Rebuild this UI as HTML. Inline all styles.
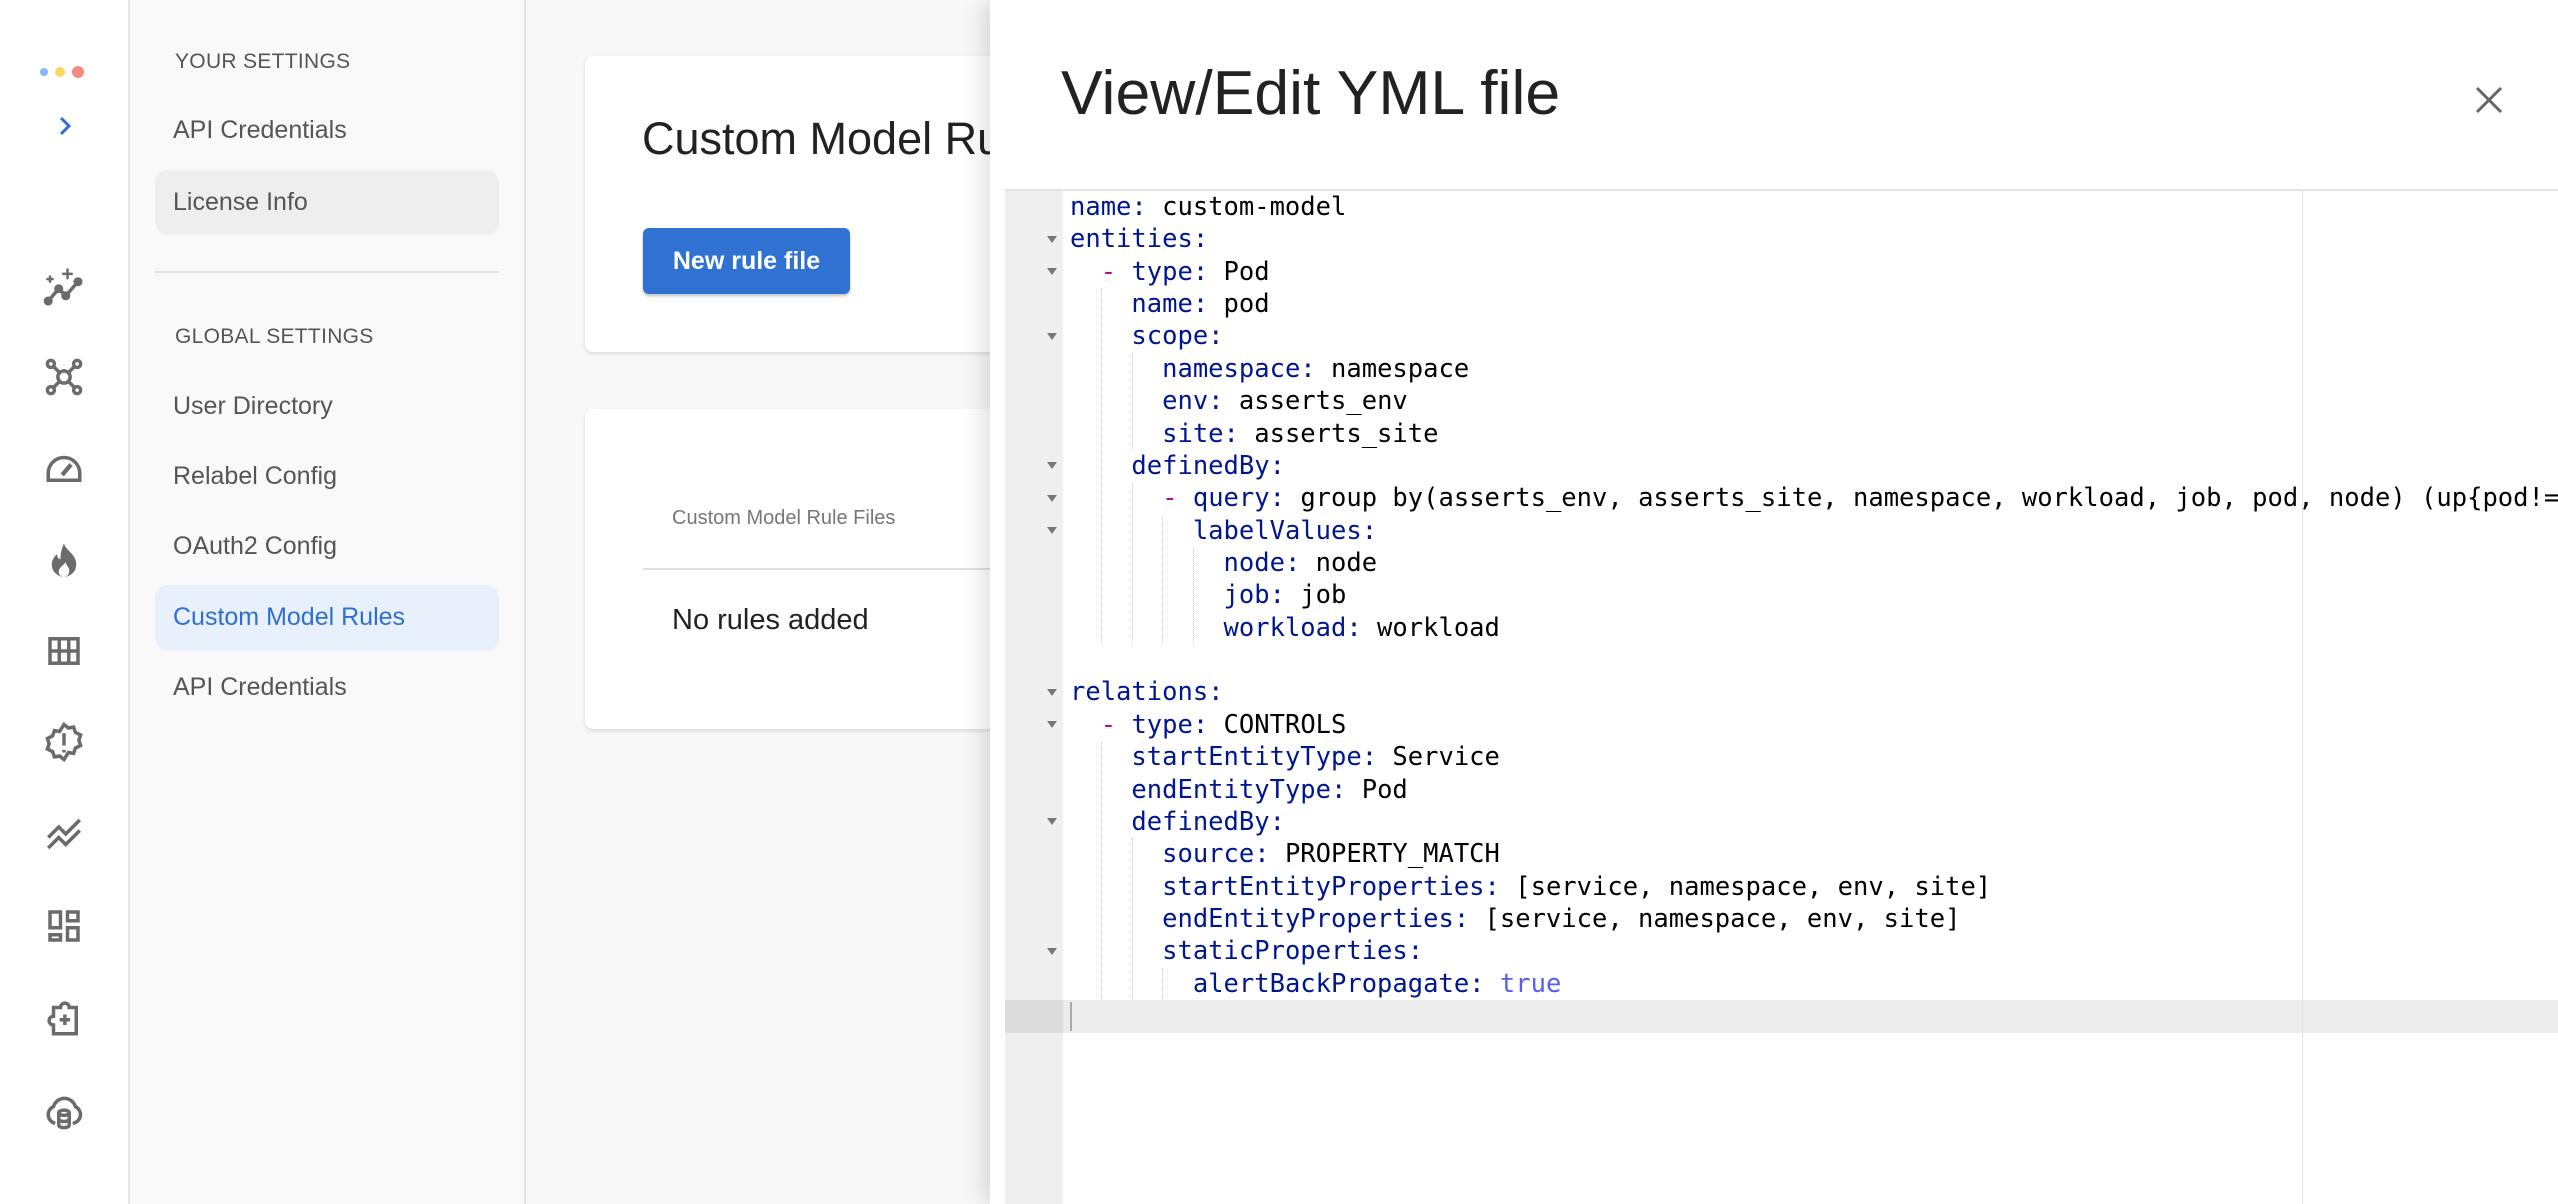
<!DOCTYPE html>
<html><head><meta charset="utf-8"><style>
*{margin:0;padding:0;box-sizing:border-box}
body{width:2558px;height:1204px;overflow:hidden;background:#f8f8f8;font-family:"Liberation Sans",Roboto,sans-serif;position:relative}
.a{position:absolute}
.rail{left:0;top:0;width:130px;height:1204px;background:#fff;border-right:2px solid #e6e6e6}
.nav{left:130px;top:0;width:396px;height:1204px;background:#f9f9f9;border-right:2px solid #e2e2e2}
.ic{position:absolute;left:43px;width:42px;height:42px}
.sec{position:absolute;left:175px;font-size:21px;color:#555;letter-spacing:.3px}
.it{position:absolute;left:173px;font-size:25px;color:#555}
.card{background:#fff;border-radius:8px;box-shadow:0 2px 4px rgba(0,0,0,.12)}
.drawer{left:990px;top:0;width:1568px;height:1204px;background:#fff;box-shadow:-8px 0 20px rgba(0,0,0,.12)}
.code{font-family:"DejaVu Sans Mono","Liberation Mono",monospace;font-size:25.5px;white-space:pre;line-height:32.4px;color:#000}
.k{color:#00168e}.d{color:#b90690}.t{color:#585cf6}
.ln{position:absolute;left:1070px;height:32.4px}
.f{position:absolute;left:1047px;width:0;height:0;border-left:5px solid transparent;border-right:5px solid transparent;border-top:7px solid #777}
.g{position:absolute;width:0;border-left:1px dotted #ccc}
</style></head><body>
<div class="a rail"></div>
<div class="a" style="left:40px;top:68px;width:8px;height:8px;border-radius:50%;background:#8ab4f8"></div>
<div class="a" style="left:55px;top:67px;width:10px;height:10px;border-radius:50%;background:#fdd663"></div>
<div class="a" style="left:72px;top:66px;width:12px;height:12px;border-radius:50%;background:#f28b82"></div>
<svg class="a" style="left:54px;top:114px" width="22" height="24" viewBox="0 0 22 24"><path d="M7 4l8 8-8 8" fill="none" stroke="#2f6fd0" stroke-width="3"/></svg>
<svg class="ic" style="top:266px" viewBox="0 0 24 24" fill="none" stroke="#6b6b6b" stroke-width="2" stroke-linecap="round"><path d="M3 20l6-7 4 4 7-8"/><circle cx="3" cy="20" r="1.6" fill="#6b6b6b"/><circle cx="9" cy="13" r="1.6" fill="#6b6b6b"/><circle cx="13" cy="17" r="1.6" fill="#6b6b6b"/><circle cx="20" cy="9" r="1.6" fill="#6b6b6b"/><path d="M14 2v5M11.5 4.5h5M4 6v3M2.5 7.5h3" stroke-width="1.4"/></svg>
<svg class="ic" style="top:356px" viewBox="0 0 24 24" fill="none" stroke="#6b6b6b" stroke-width="2"><circle cx="12" cy="12" r="3.5"/><circle cx="4.5" cy="4.5" r="2"/><circle cx="19.5" cy="4.5" r="2"/><circle cx="4.5" cy="19.5" r="2"/><circle cx="19.5" cy="19.5" r="2"/><path d="M6 6l3.5 3.5M18 6l-3.5 3.5M6 18l3.5-3.5M18 18l-3.5-3.5"/></svg>
<svg class="ic" style="top:447px" viewBox="0 0 24 24" fill="none" stroke="#6b6b6b" stroke-width="2"><path d="M3 19v-4a9 9 0 0 1 18 0v4z"/><path d="M11 16l5-6" stroke-width="2.5"/></svg>
<svg class="ic" style="top:540px" viewBox="0 0 24 24"><path d="M12 2c1 4 7 6 7 12a7 7 0 0 1-14 0c0-3 2-5 3-6 0 2 1 3 2 3 0-4 1-7 2-9zm0 19c2 0 3-1.5 3-3.5 0-2-2-3-2-5-1 2-4 3-4 5.5 0 2 1.3 3 3 3z" fill="#6b6b6b" fill-rule="evenodd"/></svg>
<svg class="ic" style="top:630px" viewBox="0 0 24 24" fill="none" stroke="#6b6b6b" stroke-width="2"><rect x="4" y="5" width="16" height="14"/><path d="M4 12h16M9.3 5v14M14.7 5v14"/></svg>
<svg class="ic" style="top:721px" viewBox="0 0 24 24" fill="none" stroke="#6b6b6b" stroke-width="2"><path d="M12 2l2.5 2 3-.5 1 3 3 1.5-1 3 1 3-3 1.5-1 3-3-.5L12 22l-2.5-2-3 .5-1-3-3-1.5 1-3-1-3 3-1.5 1-3 3 .5z"/><path d="M12 7v7M12 16.5v1.5"/></svg>
<svg class="ic" style="top:813px" viewBox="0 0 24 24" fill="none" stroke="#6b6b6b" stroke-width="2"><path d="M3 14l6-6 4 4 8-8M3 20l6-6 4 4 8-8"/></svg>
<svg class="ic" style="top:905px" viewBox="0 0 24 24" fill="none" stroke="#6b6b6b" stroke-width="2"><rect x="4" y="4" width="6" height="9"/><rect x="14" y="4" width="6" height="5"/><rect x="4" y="17" width="6" height="3"/><rect x="14" y="13" width="6" height="7"/></svg>
<svg class="ic" style="top:997px" viewBox="0 0 24 24" fill="none" stroke="#6b6b6b" stroke-width="2"><path d="M6 6h4a2.5 2.5 0 0 1 5 0h4v15H6v-5a2.5 2.5 0 0 1 0-5z"/><path d="M12.5 10v6M9.5 13h6"/></svg>
<svg class="ic" style="top:1090px" viewBox="0 0 24 24" fill="none" stroke="#6b6b6b" stroke-width="2"><path d="M7 19a5 5 0 0 1-1-9.5 6.5 6.5 0 0 1 12.5 0A5 5 0 0 1 17 19"/><ellipse cx="12" cy="13" rx="3" ry="1.5"/><path d="M9 13v7c0 2 6 2 6 0v-7M9 16.5c0 2 6 2 6 0"/></svg>

<div class="a nav"></div>
<div class="sec" style="top:50px">YOUR SETTINGS</div>
<div class="it" style="top:116px">API Credentials</div>
<div class="a" style="left:155px;top:170px;width:344px;height:65px;background:#eeeeee;border-radius:13px"></div>
<div class="it" style="top:188px">License Info</div>
<div class="a" style="left:155px;top:271px;width:344px;height:2px;background:#e3e3e3"></div>
<div class="sec" style="top:325px">GLOBAL SETTINGS</div>
<div class="it" style="top:392px">User Directory</div>
<div class="it" style="top:462px">Relabel Config</div>
<div class="it" style="top:532px">OAuth2 Config</div>
<div class="a" style="left:155px;top:585px;width:344px;height:66px;background:#e8f0fc;border-radius:13px"></div>
<div class="it" style="top:603px;color:#2f6fd0">Custom Model Rules</div>
<div class="it" style="top:673px">API Credentials</div>

<div class="a card" style="left:585px;top:56px;width:700px;height:296px"></div>
<div class="a" style="left:642px;top:113px;font-size:45px;color:#222">Custom Model Rules</div>
<div class="a" style="left:643px;top:228px;width:207px;height:66px;background:#2f72d1;border-radius:6px;box-shadow:0 2px 3px rgba(0,0,0,.25);color:#fff;font-size:25px;font-weight:bold;text-align:center;line-height:66px">New rule file</div>
<div class="a card" style="left:585px;top:409px;width:700px;height:320px"></div>
<div class="a" style="left:672px;top:507px;font-size:20px;color:#777">Custom Model Rule Files</div>
<div class="a" style="left:643px;top:568px;width:400px;height:2px;background:#e0e0e0"></div>
<div class="a" style="left:672px;top:604px;font-size:29px;color:#222">No rules added</div>

<div class="a drawer"></div>
<div class="a" style="left:1061px;top:57px;font-size:62.5px;color:#222">View/Edit YML file</div>
<svg class="a" style="left:2474px;top:85px" width="30" height="30" viewBox="0 0 30 30"><path d="M3 3l24 24M27 3L3 27" stroke="#666" stroke-width="3"/></svg>
<div class="a" style="left:1005px;top:189px;width:1553px;height:2px;background:#e4e4e4"></div>
<div class="a" style="left:1005px;top:191px;width:58px;height:1013px;background:#efefef"></div>
<div class="a" style="left:1005px;top:1000px;width:58px;height:33px;background:#dcdcdc"></div>
<div class="a" style="left:1063px;top:1000px;width:1495px;height:33px;background:#ececec"></div>
<div class="a" style="left:1070px;top:1002px;width:2px;height:29px;background:#aaa"></div>
<div class="a" style="left:2302px;top:191px;width:1px;height:1013px;background:#e4e4e4"></div>

<div class="g" style="left:1101px;top:288px;height:356px"></div>
<div class="g" style="left:1132px;top:353px;height:97px"></div>
<div class="g" style="left:1132px;top:483px;height:161px"></div>
<div class="g" style="left:1162px;top:515px;height:129px"></div>
<div class="g" style="left:1193px;top:547px;height:97px"></div>
<div class="g" style="left:1101px;top:741px;height:259px"></div>
<div class="g" style="left:1132px;top:838px;height:162px"></div>
<div class="g" style="left:1162px;top:968px;height:32px"></div>

<div class="f" style="top:236px"></div><div class="f" style="top:268px"></div><div class="f" style="top:333px"></div>
<div class="f" style="top:462px"></div><div class="f" style="top:495px"></div><div class="f" style="top:527px"></div>
<div class="f" style="top:689px"></div><div class="f" style="top:721px"></div><div class="f" style="top:818px"></div><div class="f" style="top:948px"></div>

<div class="a code" style="left:0;top:0;width:2558px;height:1204px;overflow:hidden">
<div class="ln" style="top:191px"><span class="k">name:</span> custom-model</div>
<div class="ln" style="top:223px"><span class="k">entities:</span></div>
<div class="ln" style="top:256px">  <span class="d">-</span> <span class="k">type:</span> Pod</div>
<div class="ln" style="top:288px">    <span class="k">name:</span> pod</div>
<div class="ln" style="top:320px">    <span class="k">scope:</span></div>
<div class="ln" style="top:353px">      <span class="k">namespace:</span> namespace</div>
<div class="ln" style="top:385px">      <span class="k">env:</span> asserts_env</div>
<div class="ln" style="top:418px">      <span class="k">site:</span> asserts_site</div>
<div class="ln" style="top:450px">    <span class="k">definedBy:</span></div>
<div class="ln" style="top:482px">      <span class="d">-</span> <span class="k">query:</span> group by(asserts_env, asserts_site, namespace, workload, job, pod, node) (up{pod!=""})</div>
<div class="ln" style="top:515px">        <span class="k">labelValues:</span></div>
<div class="ln" style="top:547px">          <span class="k">node:</span> node</div>
<div class="ln" style="top:579px">          <span class="k">job:</span> job</div>
<div class="ln" style="top:612px">          <span class="k">workload:</span> workload</div>
<div class="ln" style="top:676px"><span class="k">relations:</span></div>
<div class="ln" style="top:709px">  <span class="d">-</span> <span class="k">type:</span> CONTROLS</div>
<div class="ln" style="top:741px">    <span class="k">startEntityType:</span> Service</div>
<div class="ln" style="top:774px">    <span class="k">endEntityType:</span> Pod</div>
<div class="ln" style="top:806px">    <span class="k">definedBy:</span></div>
<div class="ln" style="top:838px">      <span class="k">source:</span> PROPERTY_MATCH</div>
<div class="ln" style="top:871px">      <span class="k">startEntityProperties:</span> [service, namespace, env, site]</div>
<div class="ln" style="top:903px">      <span class="k">endEntityProperties:</span> [service, namespace, env, site]</div>
<div class="ln" style="top:935px">      <span class="k">staticProperties:</span></div>
<div class="ln" style="top:968px">        <span class="k">alertBackPropagate:</span> <span class="t">true</span></div>
</div>
</body></html>
